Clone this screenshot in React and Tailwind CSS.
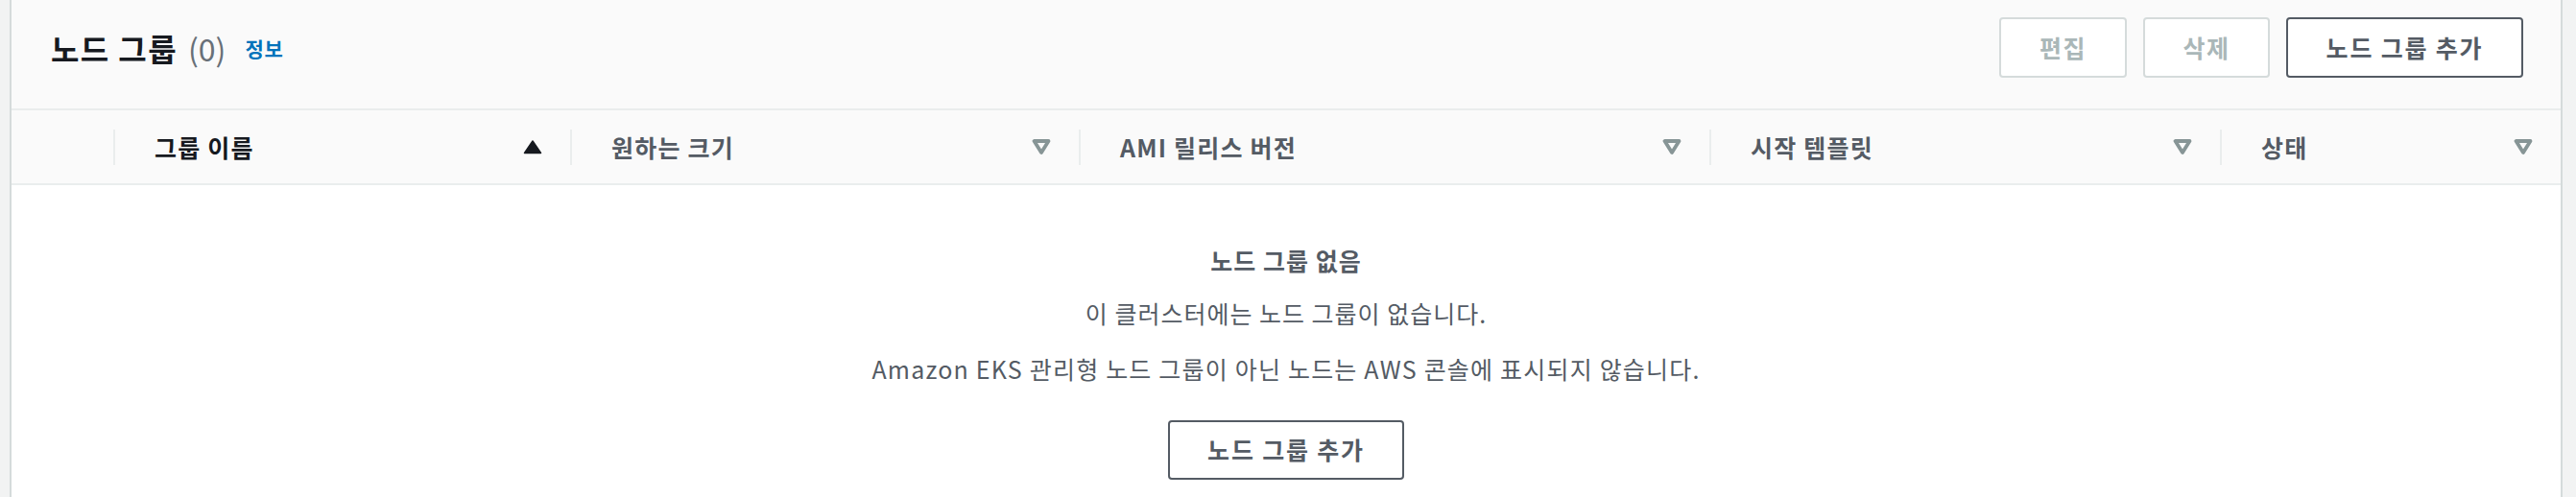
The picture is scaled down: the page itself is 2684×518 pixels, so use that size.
import React from "react";

const font = { fontFamily: "'Noto Sans CJK KR', 'Noto Sans', sans-serif" };

function SortDown() {
  return (
    <svg width="20" height="16" viewBox="0 0 20 16" className="shrink-0">
      <polygon points="2.5,2 17.5,2 10,14" fill="none" stroke="#879596" strokeWidth="3.8" strokeLinejoin="round" />
    </svg>
  );
}

function SortUp() {
  return (
    <svg width="20" height="16" viewBox="0 0 20 16" className="shrink-0">
      <polygon points="10,2 18.5,14.5 1.5,14.5" fill="#16191f" stroke="#16191f" strokeWidth="1.5" strokeLinejoin="round" />
    </svg>
  );
}

function HeadCell({ label, width, active }) {
  return (
    <div className={`flex items-center h-full ${width}`}>
      <div className="w-[2px] h-[37px] bg-[#eaeded] shrink-0" />
      <div className={`flex-1 ml-[41px] text-[25px] tracking-[1.2px] font-bold leading-none ${active ? "text-[#16191f]" : "text-[#545b64]"}`}>
        {label}
      </div>
      <div className="pr-[29px]">{active ? <SortUp /> : <SortDown />}</div>
    </div>
  );
}

export default function App() {
  return (
    <div className="w-[2684px] h-[518px] bg-[#f2f3f3] flex overflow-hidden" style={font}>
      <div className="ml-[10px] w-[2660px] h-full border-x-2 border-[#d5dbdb] bg-white flex flex-col">
        <div className="bg-[#fafafa] flex items-center justify-between pl-[41px] pr-[39px] pt-[18px] pb-[32px] border-b-2 border-[#eaeded]">
          <div className="flex items-center">
            <span className="text-[32px] tracking-[1.4px] font-bold text-[#16191f] leading-none">노드 그룹</span>
            <span className="text-[32px] text-[#687078] leading-none ml-[11px]">(0)</span>
            <span className="text-[21px] tracking-[0.8px] font-bold text-[#0073bb] leading-none ml-[20px] mt-[2px]">정보</span>
          </div>
          <div className="flex items-center gap-[17px]">
            <button className="w-[133px] h-[63px] border-2 border-[#d5dbdb] rounded-[4px] bg-white text-[25px] tracking-[1.5px] font-bold text-[#aab7b8]">편집</button>
            <button className="w-[132px] h-[63px] border-2 border-[#d5dbdb] rounded-[4px] bg-white text-[25px] tracking-[1.5px] font-bold text-[#aab7b8]">삭제</button>
            <button className="w-[247px] h-[63px] border-2 border-[#545b64] rounded-[4px] bg-white text-[25px] tracking-[1.8px] font-bold text-[#545b64]">노드 그룹 추가</button>
          </div>
        </div>
        <div className="bg-[#fafafa] h-[78px] flex items-center border-b-2 border-[#eaeded]">
          <div className="w-[106px] shrink-0" />
          <HeadCell label="그룹 이름" width="w-[476px]" active />
          <HeadCell label="원하는 크기" width="w-[530px]" />
          <HeadCell label="AMI 릴리스 버전" width="w-[657px]" />
          <HeadCell label="시작 템플릿" width="w-[532px]" />
          <HeadCell label="상태" width="flex-1" />
        </div>
        <div className="flex-1 bg-white flex flex-col items-center pt-[61px]">
          <div className="text-[25px] tracking-[1px] font-bold text-[#545b64] leading-[34px]">노드 그룹 없음</div>
          <div className="text-[25px] tracking-[1px] text-[#545b64] leading-[34px] mt-[21px]">이 클러스터에는 노드 그룹이 없습니다.</div>
          <div className="text-[25px] tracking-[1.2px] text-[#545b64] leading-[34px] mt-[24px]">Amazon EKS 관리형 노드 그룹이 아닌 노드는 AWS 콘솔에 표시되지 않습니다.</div>
          <button className="mt-[37px] w-[246px] h-[62px] border-2 border-[#545b64] rounded-[4px] bg-white text-[25px] tracking-[1.8px] font-bold text-[#545b64]">노드 그룹 추가</button>
        </div>
      </div>
    </div>
  );
}
